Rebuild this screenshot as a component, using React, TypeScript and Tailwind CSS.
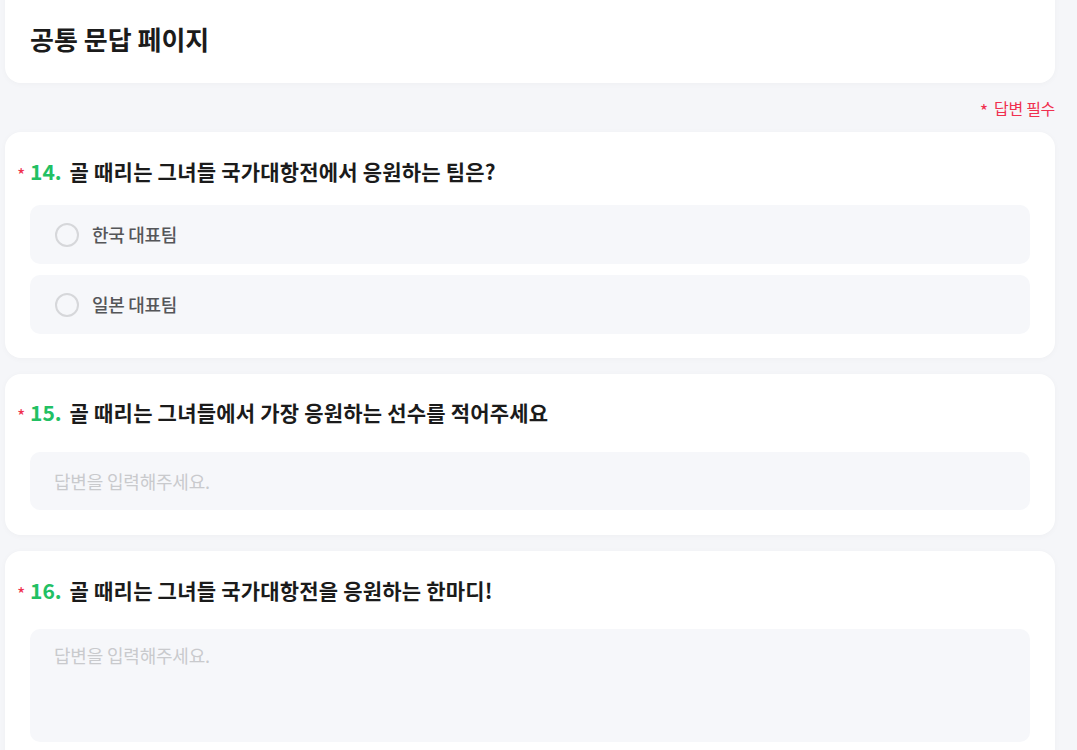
import React from "react";

const font = { fontFamily: '"Noto Sans CJK KR", "Noto Sans", sans-serif' };

function Title({ n, text }: { n: number; text: string }) {
  return (
    <div className="flex items-center h-[28px]">
      <span className="text-[#f0304f] text-[18px] w-[13px] mt-[5px] -ml-[1px]">*</span>
      <span className="text-[21px] font-bold text-[#22c063] tracking-[0px]">{n}.</span>
      <span className="text-[21px] font-bold text-[#1b1b1b] ml-[8px] tracking-[0.2px]">{text}</span>
    </div>
  );
}

function Option({ label }: { label: string }) {
  return (
    <div className="h-[59px] rounded-[10px] bg-[#f6f7fa] flex items-center pl-[25px]">
      <span className="w-[24px] h-[24px] rounded-full border-2 border-[#d6d7da] bg-[#f6f7fa]" />
      <span className="ml-[13px] text-[18px] font-medium text-[#555659] tracking-[-0.3px]">{label}</span>
    </div>
  );
}

export default function App() {
  return (
    <div className="min-h-[750px] bg-[#f5f6f9] px-[5px] pr-[22px] overflow-hidden" style={font}>
      <div className="mt-[-20px] h-[103px] bg-white rounded-[16px] shadow-[0_1px_6px_rgba(0,0,0,0.03)] flex items-end pb-[27px] pl-[25px]">
        <h1 className="text-[26px] font-bold text-[#1b1b1b] tracking-[0px] leading-[34px]">공통 문답 페이지</h1>
      </div>
      <div className="flex justify-end items-center h-[49px]">
        <span className="text-[#f0304f] text-[18px] mt-[5px]">*</span>
        <span className="text-[#f0304f] text-[16px] ml-[6px] tracking-[-0.3px]">답변 필수</span>
      </div>
      <div className="flex flex-col gap-[16px]">
        <div className="bg-white rounded-[16px] shadow-[0_1px_6px_rgba(0,0,0,0.03)] pt-[26px] pb-[24px] px-[13px]">
          <Title n={14} text="골 때리는 그녀들 국가대항전에서 응원하는 팀은?" />
          <div className="mt-[19px] ml-[12px] mr-[12px] flex flex-col gap-[11px]">
            <Option label="한국 대표팀" />
            <Option label="일본 대표팀" />
          </div>
        </div>
        <div className="bg-white rounded-[16px] shadow-[0_1px_6px_rgba(0,0,0,0.03)] pt-[25px] pb-[25px] px-[13px]">
          <Title n={15} text="골 때리는 그녀들에서 가장 응원하는 선수를 적어주세요" />
          <div className="mt-[25px] ml-[12px] mr-[12px] h-[58px] rounded-[10px] bg-[#f6f7fa] flex items-center pl-[24px]">
            <span className="text-[18px] text-[#c9cacd] tracking-[-0.2px]">답변을 입력해주세요.</span>
          </div>
        </div>
        <div className="bg-white rounded-[16px] shadow-[0_1px_6px_rgba(0,0,0,0.03)] pt-[26px] pb-[25px] px-[13px]">
          <Title n={16} text="골 때리는 그녀들 국가대항전을 응원하는 한마디!" />
          <div className="mt-[24px] ml-[12px] mr-[12px] h-[113px] rounded-[10px] bg-[#f6f7fa] pl-[24px] pt-[13px]">
            <span className="text-[18px] text-[#c9cacd] tracking-[-0.2px]">답변을 입력해주세요.</span>
          </div>
        </div>
      </div>
    </div>
  );
}
